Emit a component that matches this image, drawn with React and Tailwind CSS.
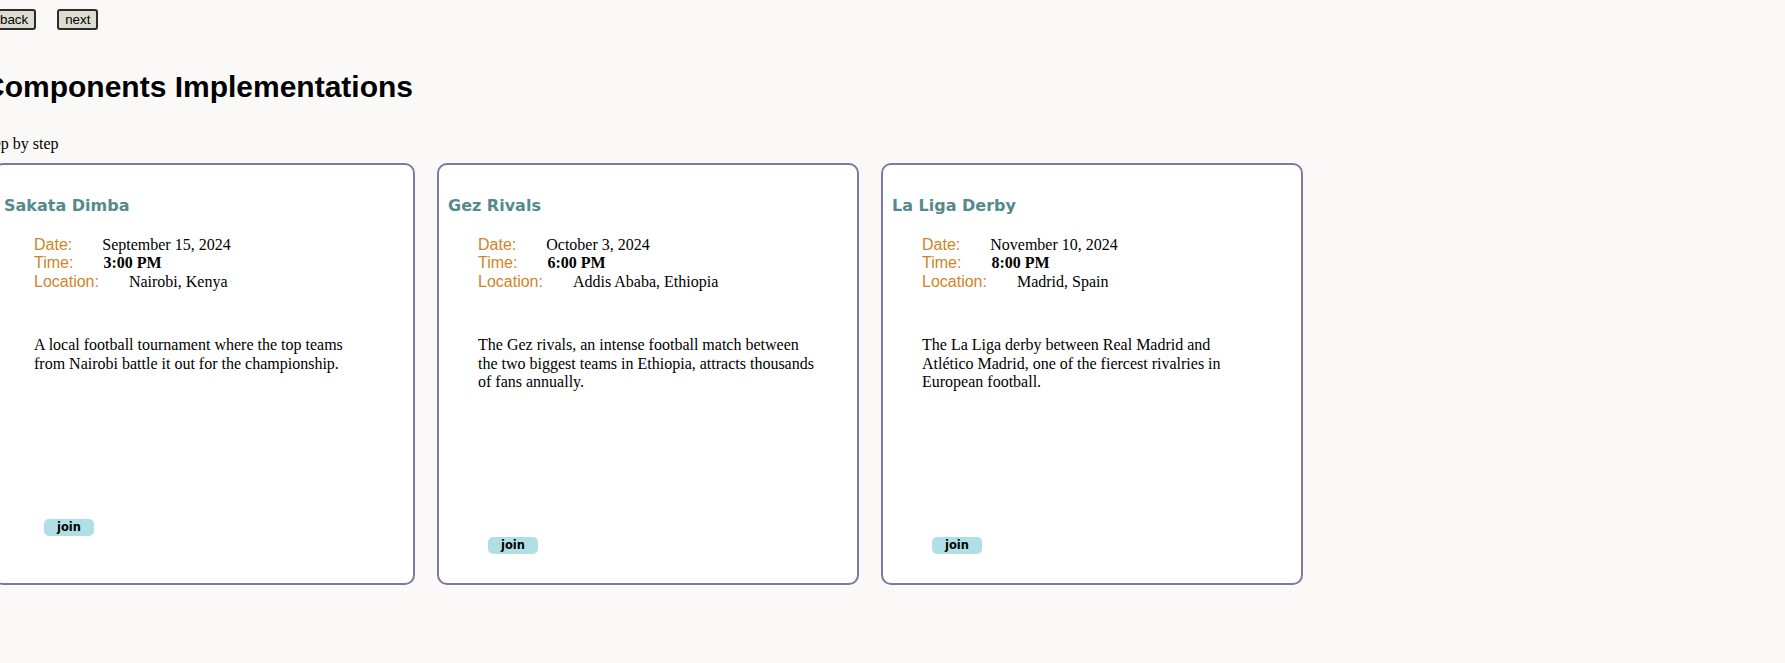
import React from 'react';

const events = [
  {
    title: 'Sakata Dimba',
    date: 'September 15, 2024',
    time: '3:00 PM',
    location: 'Nairobi, Kenya',
    description:
      'A local football tournament where the top teams from Nairobi battle it out for the championship.',
  },
  {
    title: 'Gez Rivals',
    date: 'October 3, 2024',
    time: '6:00 PM',
    location: 'Addis Ababa, Ethiopia',
    description:
      'The Gez rivals, an intense football match between the two biggest teams in Ethiopia, attracts thousands of fans annually.',
  },
  {
    title: 'La Liga Derby',
    date: 'November 10, 2024',
    time: '8:00 PM',
    location: 'Madrid, Spain',
    description:
      'The La Liga derby between Real Madrid and Atlético Madrid, one of the fiercest rivalries in European football.',
  },
];

const EventCard = ({ event }) => {
  return (
    <div className="w-[422px] h-[422px] shrink-0 border-2 border-[#7c7aa0] rounded-[10px] bg-white flex flex-col">
      {/* Title */}
      <h3 className="mt-[31px] pl-[9px] text-[16px] leading-[20px] font-bold text-[#558a8c] font-['DejaVu_Sans',Verdana,sans-serif]">
        {event.title}
      </h3>

      <div className="px-[39px] flex flex-col items-start">
        {/* Details */}
        <div className="mt-[20px] text-[16px] leading-[18.4px]">
          <div>
            <span className="mr-[30px] text-[#d08428] font-['Liberation_Sans',Arial,sans-serif]">Date:</span>
            {event.date}
          </div>
          <div>
            <span className="mr-[30px] text-[#d08428] font-['Liberation_Sans',Arial,sans-serif]">Time:</span>
            <strong className="font-bold">{event.time}</strong>
          </div>
          <div>
            <span className="mr-[30px] text-[#d08428] font-['Liberation_Sans',Arial,sans-serif]">Location:</span>
            {event.location}
          </div>
        </div>

        {/* Description */}
        <p className="mt-[45px] w-full text-[16px] leading-[18.4px]">{event.description}</p>

        <button className="mt-[146px] ml-[10px] h-[17px] px-[13px] rounded-[5px] bg-[#b0e0e6] text-black text-[11.5px] leading-[17px] font-bold font-['DejaVu_Sans',Verdana,sans-serif]">
          join
        </button>
      </div>
    </div>
  );
};

const App = () => {
  return (
    <div className="min-h-screen w-full overflow-hidden bg-[#faf9f7] text-black font-['Liberation_Serif','Times_New_Roman',serif]">
      {/* Nav buttons */}
      <div className="pt-[9px] ml-[-8px] flex gap-[21px]">
        {['back', 'next'].map((label) => (
          <button
            key={label}
            className="px-[6px] py-[1px] border-2 border-[#2b2b2b] rounded-[3px] bg-[#dcdcd1] text-[13.33px] leading-[15px] font-['Liberation_Sans',Arial,sans-serif]"
          >
            {label}
          </button>
        ))}
      </div>

      <h1 className="mt-[40px] ml-[-17px] text-[30px] leading-[34px] font-bold whitespace-nowrap font-['Liberation_Sans',Arial,sans-serif]">
        Components Implementations
      </h1>

      <p className="mt-[31px] ml-[-17px] text-[16px] leading-[18px]">step by step</p>

      {/* Cards */}
      <div className="mt-[10px] ml-[-7px] flex gap-[22px]">
        {events.map((event) => (
          <EventCard key={event.title} event={event} />
        ))}
      </div>
    </div>
  );
};

export default App;
